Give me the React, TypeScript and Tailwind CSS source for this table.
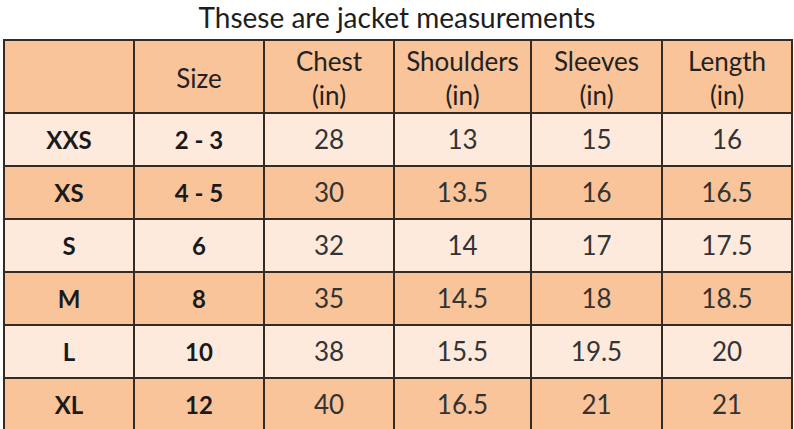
const HEADERS = [
  { top: '', bottom: '' },
  { top: 'Size', bottom: '' },
  { top: 'Chest', bottom: '(in)' },
  { top: 'Shoulders', bottom: '(in)' },
  { top: 'Sleeves', bottom: '(in)' },
  { top: 'Length', bottom: '(in)' },
]

const ROWS = [
  ['XXS', '2 - 3', '28', '13', '15', '16'],
  ['XS', '4 - 5', '30', '13.5', '16', '16.5'],
  ['S', '6', '32', '14', '17', '17.5'],
  ['M', '8', '35', '14.5', '18', '18.5'],
  ['L', '10', '38', '15.5', '19.5', '20'],
  ['XL', '12', '40', '16.5', '21', '21'],
]

const WIDTHS = ['w-[130px]', 'w-[130px]', 'w-[130px]', 'w-[137px]', 'w-[131px]', 'w-[130px]']

export default function App() {
  return (
    <div className="w-[794px] h-[429px] overflow-hidden bg-white font-['Lato',sans-serif] text-[#222]">
      <h1 className="h-[39px] text-center text-[28px] leading-[34px] text-[#1e1e1e]">
        Thsese are jacket measurements
      </h1>
      <table className="ml-[3px] w-[789px] border-collapse table-fixed">
        <colgroup>
          {WIDTHS.map((w, i) => (
            <col key={i} className={w} />
          ))}
        </colgroup>
        <thead>
          <tr className="h-[73px] bg-[#f9c49a]">
            {HEADERS.map((h, i) => (
              <th
                key={i}
                className="border-2 border-[#352b25] p-0 pt-[2px] text-center align-middle text-[26px] font-normal leading-[34px] text-[#222]"
              >
                <div>{h.top}</div>
                {h.bottom && <div>{h.bottom}</div>}
              </th>
            ))}
          </tr>
        </thead>
        <tbody>
          {ROWS.map((r, ri) => (
            <tr key={r[0]} className={ri % 2 === 0 ? 'h-[53px] bg-[#fdeadd]' : 'h-[53px] bg-[#f9c49a]'}>
              {r.map((c, ci) => (
                <td
                  key={ci}
                  className={
                    ci < 2
                      ? 'border-2 border-[#352b25] p-0 text-center align-middle text-[24px] font-bold text-[#1a1a1a]'
                      : 'border-2 border-[#352b25] p-0 text-center align-middle text-[26px] text-[#333]'
                  }
                >
                  {c}
                </td>
              ))}
            </tr>
          ))}
        </tbody>
      </table>
    </div>
  )
}
